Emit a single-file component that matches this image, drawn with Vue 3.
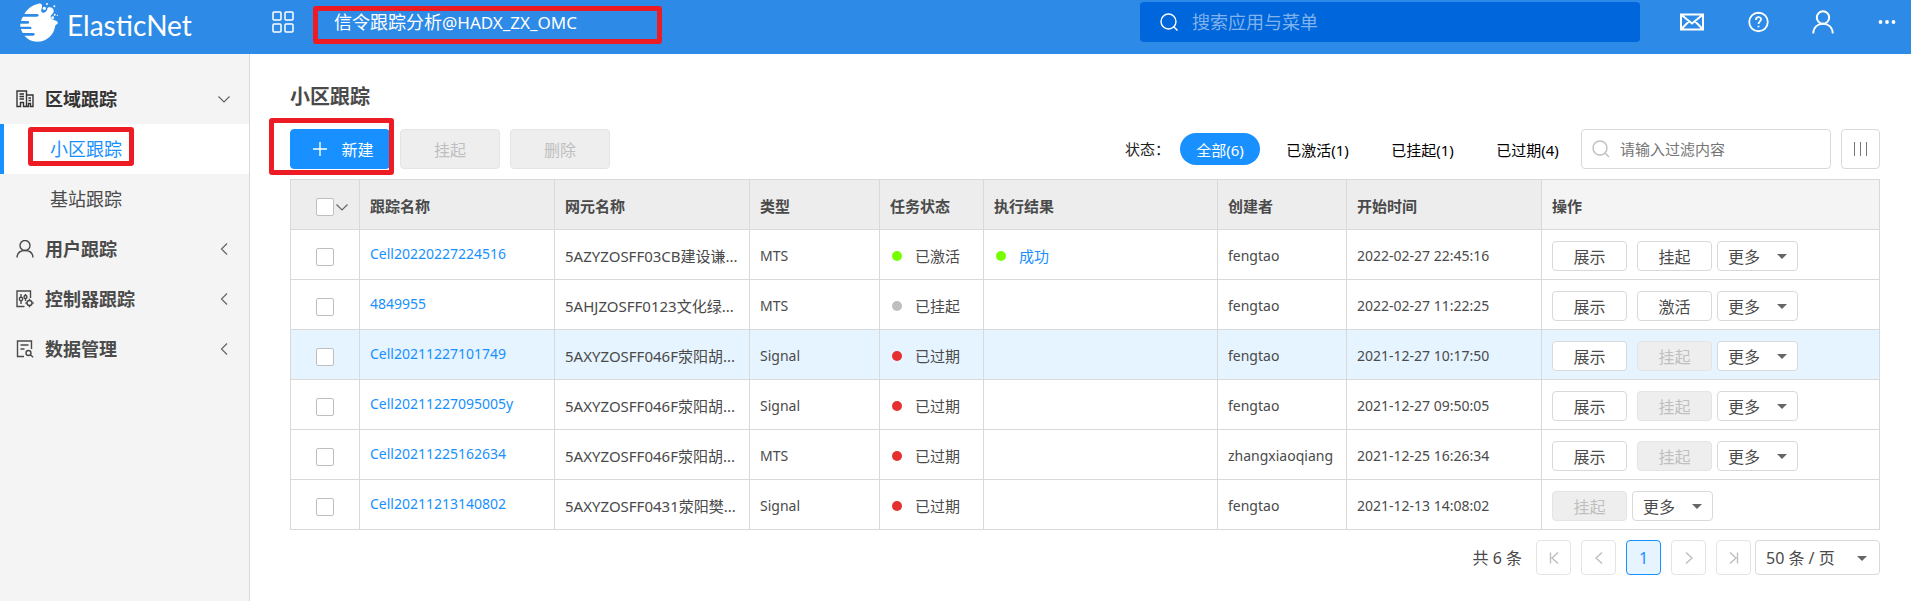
<script setup>
import { ref } from 'vue'

const groups = [
  { name: '用户跟踪', icon: 'user' },
  { name: '控制器跟踪', icon: 'controller' },
  { name: '数据管理', icon: 'data' },
]

const filters = ['全部(6)', '已激活(1)', '已挂起(1)', '已过期(4)']
const activeFilter = ref('全部(6)')

const columns = [
  { key: 'name', label: '跟踪名称' },
  { key: 'ne', label: '网元名称' },
  { key: 'type', label: '类型' },
  { key: 'state', label: '任务状态' },
  { key: 'result', label: '执行结果' },
  { key: 'owner', label: '创建者' },
  { key: 'start', label: '开始时间' },
]

const show = { label: '展示' }
const suspend = { label: '挂起' }
const activate = { label: '激活' }
const suspendOff = { label: '挂起', disabled: true }

const rows = [
  { name: 'Cell20220227224516', ne: '5AZYZOSFF03CB建设谦...', type: 'MTS', state: '已激活', color: 'green', result: '成功', owner: 'fengtao', start: '2022-02-27 22:45:16', actions: [show, suspend] },
  { name: '4849955', ne: '5AHJZOSFF0123文化绿...', type: 'MTS', state: '已挂起', color: 'gray', owner: 'fengtao', start: '2022-02-27 11:22:25', actions: [show, activate] },
  { name: 'Cell20211227101749', ne: '5AXYZOSFF046F荥阳胡...', type: 'Signal', state: '已过期', color: 'red', owner: 'fengtao', start: '2021-12-27 10:17:50', actions: [show, suspendOff], hover: true },
  { name: 'Cell20211227095005y', ne: '5AXYZOSFF046F荥阳胡...', type: 'Signal', state: '已过期', color: 'red', owner: 'fengtao', start: '2021-12-27 09:50:05', actions: [show, suspendOff] },
  { name: 'Cell20211225162634', ne: '5AXYZOSFF046F荥阳胡...', type: 'MTS', state: '已过期', color: 'red', owner: 'zhangxiaoqiang', start: '2021-12-25 16:26:34', actions: [show, suspendOff] },
  { name: 'Cell20211213140802', ne: '5AXYZOSFF0431荥阳樊...', type: 'Signal', state: '已过期', color: 'red', owner: 'fengtao', start: '2021-12-13 14:08:02', actions: [suspendOff] },
]
</script>

<template>
  <div class="app">
    <header class="topbar">
      <a class="brand" href="#">
        <svg class="brand-mark" viewBox="0 0 120 120" aria-hidden="true">
          <path fill="#fff" d="M57 6c8-3 13 0 12 8 0 6-5 10-1 16 4 5 10 2 14-2 4-5 2-12 8-12 9 0 15 4 14 13-1 6-9 8-9 16 0 6 8 8 12 10 5 2 10 2 9 10-4 3-7 3-8 9-4 26-26 45-54 45-15 0-28-7-38-18h26c7 0 7-8 0-8H11c-3-5-4-8-5-12h27c6 0 6-7 0-7H4V65h22c6 0 6-8 0-8H6c1-5 3-9 6-13h41c8 0 8-8 0-8H16C26 20 40 9 57 6z" />
          <g fill="#fff">
            <circle cx="76" cy="19" r="5" /><circle cx="84" cy="6" r="3" />
            <circle cx="106" cy="13" r="3" /><circle cx="101" cy="47" r="4" />
            <circle cx="107" cy="38" r="3" /><circle cx="115" cy="40" r="2" />
          </g>
        </svg>
        <span class="brand-name">ElasticNet</span>
      </a>
      <button class="icon-btn apps" aria-label="应用">
        <svg width="22" height="22" viewBox="0 0 22 22" fill="none" stroke="#fff" stroke-width="1.5">
          <rect x="1" y="1" width="8" height="8" rx="1" /><rect x="13" y="1" width="8" height="8" rx="1" />
          <rect x="1" y="13" width="8" height="8" rx="1" /><rect x="13" y="13" width="8" height="8" rx="1" />
        </svg>
      </button>
      <div class="app-title mark">信令跟踪分析<span class="app-host">@HADX_ZX_OMC</span></div>
      <label class="global-search">
        <svg width="18" height="18" viewBox="0 0 18 18" fill="none" stroke="#fff" stroke-width="1.4">
          <circle cx="8.5" cy="8.5" r="7.5" /><path d="M13.5 13.5l4 4" />
        </svg>
        <input type="text" placeholder="搜索应用与菜单" aria-label="搜索应用与菜单" />
      </label>
      <nav class="tools">
        <button class="icon-btn" aria-label="消息">
          <svg width="24" height="18" viewBox="0 0 24 18" fill="none" stroke="#fff" stroke-width="2">
            <path d="M1 1.5h22v15H1zM1 1.5l11 9 11-9M1 16.500l8-8.200M23 16.500l-8-8.200" />
          </svg>
        </button>
        <button class="icon-btn" aria-label="帮助">
          <svg width="21" height="22" viewBox="0 0 22 22" fill="none" stroke="#fff" stroke-width="1.9">
            <circle cx="11" cy="11" r="9.700" /><path d="M8.300 9c0-4 5.400-4 5.400-.8 0 2-2.700 2.300-2.700 5M11 14.800v1.800" />
          </svg>
        </button>
        <button class="icon-btn" aria-label="用户">
          <svg width="22" height="24" viewBox="0 0 22 24" fill="none" stroke="#fff" stroke-width="2">
            <circle cx="11" cy="7.500" r="6.200" /><path d="M1.200 23.500C1.600 17 6 13.800 11 13.800s9.400 3.200 9.800 9.700" />
          </svg>
        </button>
        <button class="icon-btn" aria-label="更多">
          <svg width="18" height="4" viewBox="0 0 18 4" fill="#fff">
            <circle cx="2.500" cy="2" r="1.900" /><circle cx="9" cy="2" r="1.900" /><circle cx="15.500" cy="2" r="1.900" />
          </svg>
        </button>
      </nav>
    </header>

    <div class="body">
      <aside class="sidebar">
        <a class="group open" href="#">
          <svg class="group-icon" viewBox="0 0 18 18" fill="none" stroke="#333" stroke-width="1.400">
            <path d="M1 16.500V1h9.500v15.500H7.500v-4h-3v4zM3.500 4h4.500M3.500 6.500h4.500M3.500 9h4.500M10.500 5h6.500v11.500h-2.500v-3h-2v3h-2M12.500 8h2.500M12.500 10.500h2.500" />
          </svg>
          <span>区域跟踪</span>
          <svg class="chev" viewBox="0 0 12 12"><path d="M.5 3.500L6 9l5.500-5.500" /></svg>
        </a>
        <a class="item active" href="#"><span class="mark">小区跟踪</span></a>
        <a class="item" href="#"><span>基站跟踪</span></a>
        <a v-for="g in groups" :key="g.name" class="group" href="#">
          <svg class="group-icon" viewBox="0 0 18 18" fill="none" stroke="#4a4a4a" stroke-width="1.400">
            <template v-if="g.icon === 'user'">
              <circle cx="9" cy="5.500" r="5" /><path d="M1 17.500c.3-4.500 3.500-7 8-7s7.700 2.500 8 7" />
            </template>
            <template v-else-if="g.icon === 'controller'">
              <path d="M8.500 16.500H1V1h13.500v7M5 4v3M5 11v3M9.500 4v1.500M9.500 9v2" />
              <circle cx="5" cy="9" r="1.700" /><circle cx="9.500" cy="7" r="1.500" />
              <circle cx="13.500" cy="13" r="2.500" /><path d="M13.500 8.800v1.500M13.500 15.700v1.500M9.300 13h1.500M16.200 13h1.500" />
            </template>
            <template v-else>
              <path d="M8 16.500H1.500V1h14v8M4.500 5h8M4.500 9h4" />
              <circle cx="12.500" cy="13" r="2.500" /><path d="M14.200 14.800l3 2.500" />
            </template>
          </svg>
          <span>{{ g.name }}</span>
          <svg class="chev" viewBox="0 0 12 12"><path d="M9 .5L3.500 6 9 11.500" /></svg>
        </a>
      </aside>

      <main class="main">
        <h1>小区跟踪</h1>
        <div class="toolbar">
          <span class="create mark">
            <button class="btn primary">
              <svg width="16" height="16" viewBox="0 0 16 16" stroke="#fff" stroke-width="1.400"><path d="M8 1v14M1 8h14" /></svg>
              新建
            </button>
          </span>
          <button class="btn" disabled>挂起</button>
          <button class="btn" disabled>删除</button>
          <div class="filters">
            <span class="filters-label">状态：</span>
            <button
              v-for="f in filters" :key="f" class="pill" :class="{ on: f === activeFilter }"
              @click="activeFilter = f"
            >{{ f }}</button>
          </div>
          <label class="filter-box">
            <svg width="18" height="18" viewBox="0 0 18 18" fill="none" stroke="#bfbfbf" stroke-width="1.400">
              <circle cx="8" cy="8" r="7" /><path d="M13 13l4 4" />
            </svg>
            <input type="text" placeholder="请输入过滤内容" aria-label="请输入过滤内容" />
          </label>
          <button class="columns-btn" aria-label="列设置">
            <svg width="16" height="14" viewBox="0 0 16 14" stroke="#777" stroke-width="1"><path d="M1.500 0v14M7.500 0v14M13.500 0v14" /></svg>
          </button>
        </div>

        <table>
          <colgroup>
            <col class="c-check" /><col class="c-wide" /><col class="c-wide" /><col class="c-type" />
            <col class="c-state" /><col class="c-result" /><col class="c-owner" /><col class="c-wide" /><col />
          </colgroup>
          <thead>
            <tr>
              <th class="check">
                <input type="checkbox" aria-label="全选" />
                <svg class="chev" viewBox="0 0 12 12"><path d="M.5 3.500L6 9l5.500-5.500" /></svg>
              </th>
              <th v-for="c in columns" :key="c.key">{{ c.label }}</th>
              <th class="ops">操作</th>
            </tr>
          </thead>
          <tbody>
            <tr v-for="r in rows" :key="r.name" :class="{ hover: r.hover }">
              <td class="check"><input type="checkbox" :aria-label="r.name" /></td>
              <td><a class="name" href="#">{{ r.name }}</a></td>
              <td>{{ r.ne }}</td>
              <td class="latin">{{ r.type }}</td>
              <td><span class="status"><i class="dot" :class="r.color"></i>{{ r.state }}</span></td>
              <td><span v-if="r.result" class="status"><i class="dot green"></i><a href="#">{{ r.result }}</a></span></td>
              <td class="latin">{{ r.owner }}</td>
              <td class="latin">{{ r.start }}</td>
              <td>
                <div class="actions">
                  <button v-for="a in r.actions" :key="a.label" class="btn small" :disabled="a.disabled">{{ a.label }}</button>
                  <button class="btn small more" aria-haspopup="menu">更多<i class="caret"></i></button>
                </div>
              </td>
            </tr>
          </tbody>
        </table>

        <div class="pager">
          <span class="total">共 6 条</span>
          <button class="page" disabled aria-label="首页"><svg viewBox="0 0 12 12"><path d="M2.500.5v11M10 .5L4 6l6 5.500" /></svg></button>
          <button class="page" disabled aria-label="上一页"><svg viewBox="0 0 12 12"><path d="M9 .5L3 6l6 5.500" /></svg></button>
          <button class="page current">1</button>
          <button class="page" disabled aria-label="下一页"><svg viewBox="0 0 12 12"><path d="M3 .5L9 6l-6 5.500" /></svg></button>
          <button class="page" disabled aria-label="末页"><svg viewBox="0 0 12 12"><path d="M9.500.5v11M2 .5L8 6l-6 5.500" /></svg></button>
          <div class="size">
            <select aria-label="每页条数"><option>50 条 / 页</option></select>
            <i class="caret"></i>
          </div>
        </div>
      </main>
    </div>
  </div>
</template>

<style>
body { margin: 0; background: #fff; }
</style>

<style scoped>
.app, .app button, .app input, .app select {
  font-family: "Noto Sans", "Noto Sans CJK SC", sans-serif;
}
.app { color: #4a4a4a; font-size: 15px; line-height: 20px; }
.app * { box-sizing: border-box; }
a { color: #1890ff; text-decoration: none; }
button { cursor: pointer; }
button:disabled { cursor: not-allowed; }
svg { display: block; flex: none; }

.topbar { display: flex; align-items: center; height: 54px; padding: 0 15px 10px 19px; background: #2d8ae6; }
.brand { display: flex; align-items: center; width: 253px; gap: 8px; color: #fff; }
.brand-mark { width: 40px; height: 40px; }
.brand-name { font-family: Lato, sans-serif; font-size: 28px; line-height: 40px; padding-top: 6px; }
.icon-btn { display: flex; border: 0; padding: 0; background: none; }
.app-title { margin-left: 40px; color: #fff; font-size: 18px; line-height: 24px; white-space: nowrap; }
.app-host { font-size: 17px; }
.global-search {
  display: flex; align-items: center; gap: 14px; width: 500px; height: 40px; margin-left: auto;
  padding: 0 20px; border-radius: 4px; background: #0066db;
}
.global-search input { flex: 1; min-width: 0; border: 0; padding: 0; outline: 0; background: none; color: #fff; font-size: 18px; }
.global-search input::placeholder { color: #80b2ed; }
.tools { display: flex; align-items: center; justify-content: space-between; width: 216px; margin-left: 40px; }

/* Highlight frames laid over the marked controls */
.mark { position: relative; }
.mark::after { content: ""; position: absolute; border: 5px solid #ed1c24; border-radius: 3px; pointer-events: none; }
.app-title.mark::after { inset: -4px -85px -9px -21px; }
.item .mark::after { inset: -9px -12px -4px -22px; }
.create.mark::after { inset: -11px -4px -6px -21px; }

.body { display: flex; min-height: calc(100vh - 54px); }
.sidebar { flex: none; width: 250px; padding-top: 20px; border-right: 1px solid #d9d9d9; background: #f4f4f4; }
.group, .item { display: flex; align-items: center; height: 50px; font-size: 18px; line-height: 26px; color: #4a4a4a; }
.group { padding: 0 19px 0 16px; gap: 11px; font-weight: 700; }
.group.open { color: #333; }
.group-icon { width: 18px; height: 18px; }
.chev { width: 12px; height: 12px; fill: none; stroke: #666; stroke-width: 1.2; }
.group .chev { margin-left: auto; }
.item { padding-left: 50px; }
.item.active { padding-left: 46px; border-left: 4px solid #1890ff; background: #fff; color: #1890ff; }

.main { flex: 1; min-width: 0; padding: 28px 31px 20px 40px; }
h1 { margin: 0 0 17px; font-size: 20px; line-height: 30px; font-weight: 700; }
.toolbar { display: flex; align-items: center; gap: 10px; margin-bottom: 10px; }
.create { display: flex; }
.btn {
  display: flex; align-items: center; justify-content: center; width: 100px; height: 40px; padding: 0;
  border: 1px solid #d9d9d9; border-radius: 4px; background: #fff; color: #4a4a4a; font-size: 16px;
}
.btn.primary { gap: 13px; border-color: #1890ff; background: #1890ff; color: #fff; padding-left: 6px; }
.btn:disabled { border-color: #e4e4e4; background: #eee; color: #bfbfbf; }
.btn.small { width: 75px; height: 30px; }
.btn.small.more { width: 81px; justify-content: space-between; padding: 0 10px; margin-left: -5px; }
.filters { display: flex; align-items: center; gap: 10px; margin: 0 -4px 0 auto; color: #222; }
.filters-label { width: 45px; }
.pill { width: 95px; height: 32px; padding: 0; border: 0; border-radius: 16px; background: none; color: #000; font-size: 15px; white-space: nowrap; }
.pill.on { width: 80px; background: #1890ff; color: #fff; }
.filter-box {
  display: flex; align-items: center; gap: 10px; width: 250px; height: 40px; padding: 0 10px;
  border: 1px solid #d9d9d9; border-radius: 4px;
}
.filter-box input { flex: 1; min-width: 0; border: 0; padding: 0; outline: 0; font-size: 15px; }
.filter-box input::placeholder { color: #757575; }
.columns-btn {
  display: flex; align-items: center; justify-content: center; width: 39px; height: 40px; padding: 0;
  border: 1px solid #d9d9d9; border-radius: 4px; background: #fff;
}

table { width: 100%; table-layout: fixed; border-collapse: separate; border-spacing: 0; border: 1px solid #d9d9d9; border-width: 1px 0 0 1px; }
.c-check { width: 69px; }
.c-wide { width: 195px; }
.c-type { width: 130px; }
.c-state { width: 104px; }
.c-result { width: 234px; }
.c-owner { width: 129px; }
th, td { height: 50px; padding: 3px 10px 0; border: 1px solid #d9d9d9; border-width: 0 1px 1px 0; text-align: left; white-space: nowrap; overflow: hidden; }
th { background: #ededed; font-weight: 700; }
th.ops { background: #f4f4f4; }
tr.hover td { background: #e6f4ff; }
.latin { font-size: 14px; }
.check { padding: 2px 0 0 25px; }
.check input {
  appearance: none; display: inline-block; width: 18px; height: 18px; margin: 0; vertical-align: middle;
  border: 1px solid #bfbfbf; border-radius: 2px; background: #fff;
}
.check .chev { display: inline-block; margin-left: 2px; vertical-align: middle; }
.name { display: inline-block; padding-bottom: 5px; font-size: 14px; }
.status { display: flex; align-items: center; gap: 13px; padding-left: 2px; }
.dot { width: 10px; height: 10px; border-radius: 50%; }
.green { background: #76ff03; }
.gray { background: #bfbfbf; }
.red { background: #e5302f; }
.actions { display: flex; gap: 10px; }
.caret { border: 5px solid transparent; border-top-color: #666; border-bottom: 0; }

.pager { display: flex; align-items: center; justify-content: flex-end; gap: 10px; margin-top: 10px; font-size: 16px; }
.total { margin-right: 4px; }
.page {
  display: flex; align-items: center; justify-content: center; width: 35px; height: 35px; padding: 0;
  border: 1px solid #d9d9d9; border-radius: 4px; background: #fff; font-size: 16px;
}
.page:disabled { border-color: #e4e4e4; }
.page svg { width: 12px; height: 12px; fill: none; stroke: #bfbfbf; stroke-width: 1.4; }
.page.current { border-color: #1890ff; background: #e6f4ff; color: #1890ff; }
.size { position: relative; display: flex; margin-left: -6px; }
.size select { appearance: none; width: 125px; height: 35px; padding: 0 10px; border: 1px solid #d9d9d9; border-radius: 4px; background: #fff; color: #4a4a4a; font-size: 16px; }
.size .caret { position: absolute; right: 13px; top: 16px; pointer-events: none; }
</style>
